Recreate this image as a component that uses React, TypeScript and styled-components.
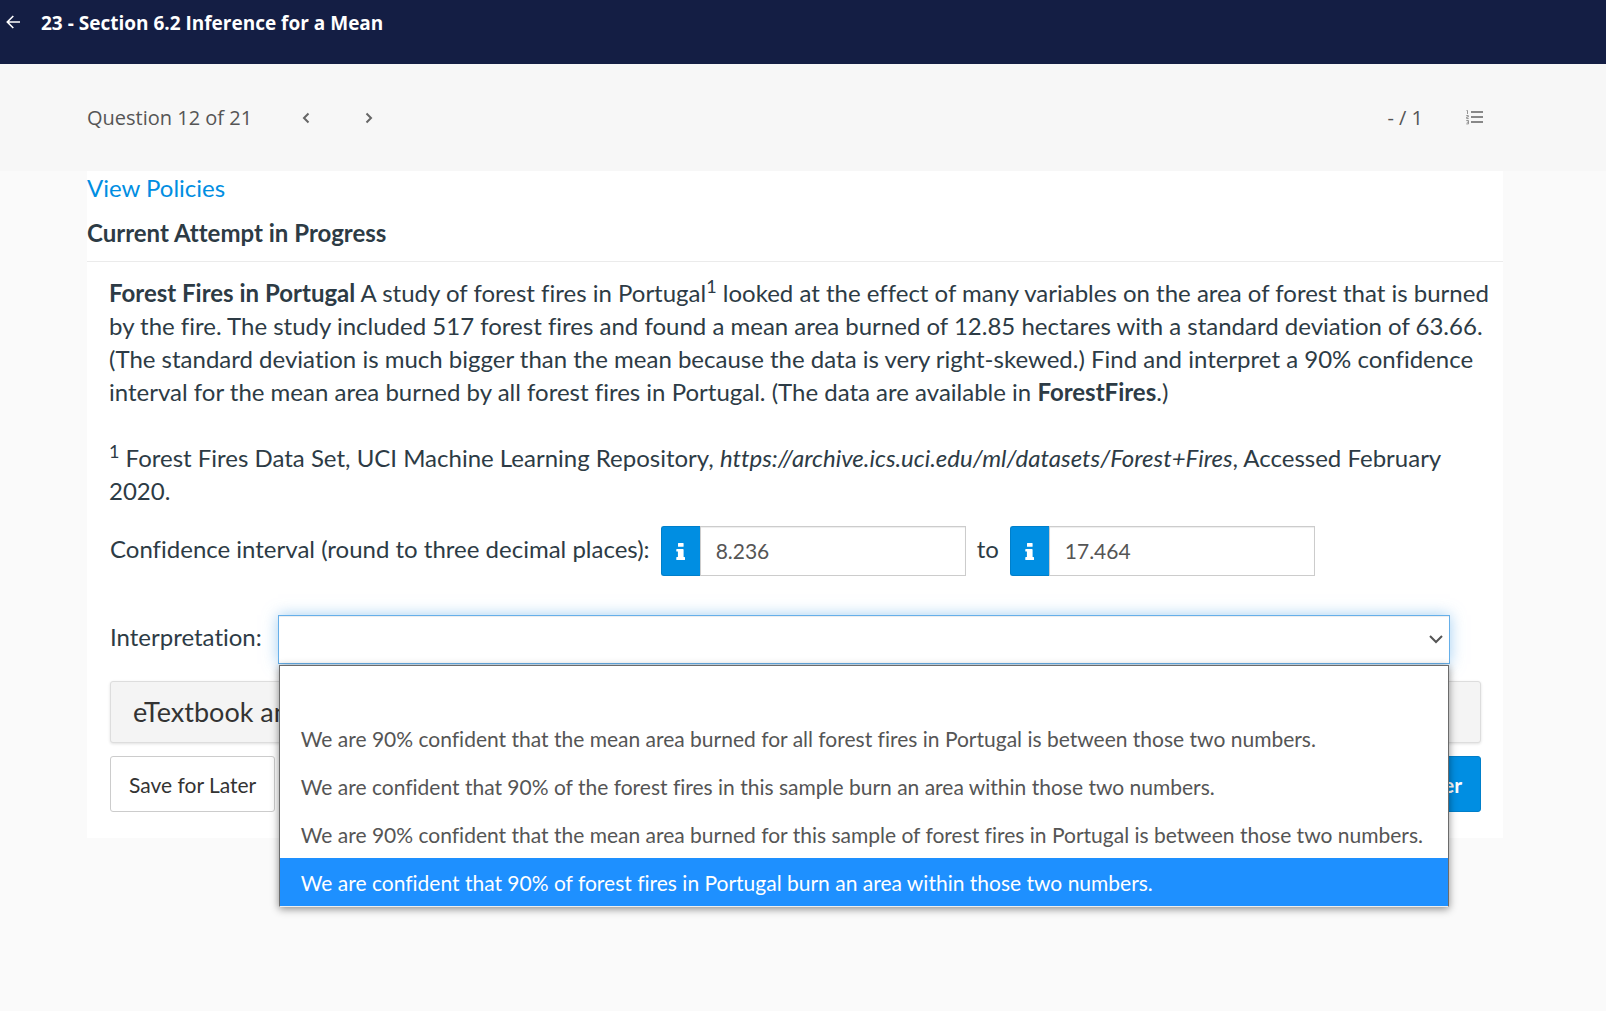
import React from 'react';
import styled, { createGlobalStyle } from 'styled-components';

const GlobalStyle = createGlobalStyle`
  *, *::before, *::after { box-sizing: border-box; }
  body {
    margin: 0;
    background: #fafafa;
    color: #2d3b45;
    font-family: Lato, sans-serif;
    font-size: 24px;
    line-height: 33px;
    font-variant-ligatures: no-common-ligatures;
  }
  button, input, select { font-family: inherit; font-variant-ligatures: inherit; }
  h1, h2, p, ul { margin: 0; padding: 0; }
`;

const Page = styled.div`
  min-height: 100vh;
`;

const Header = styled.header`
  display: flex;
  align-items: flex-start;
  gap: 21px;
  height: 64px;
  padding: 8px 5px;
  background: #141e44;
  color: #fff;
  font-family: 'Open Sans', sans-serif;
`;

const IconButton = styled.button`
  display: flex;
  align-items: center;
  justify-content: center;
  padding: 0;
  border: 0;
  background: none;
  color: inherit;
`;

const BackButton = styled(IconButton)`
  width: 15px;
  height: 28px;
`;

const Title = styled.h1`
  font-size: 19px;
  line-height: 30px;
  font-weight: 700;
`;

const QuestionBar = styled.nav`
  display: flex;
  align-items: center;
  height: 107px;
  padding: 0 123px 0 87px;
  background: #f7f7f7;
  color: #555;
  font-family: 'Open Sans', sans-serif;
  font-size: 20px;
`;

const Pager = styled.div`
  display: flex;
  margin-left: 42px;
  gap: 39px;
`;

const PagerButton = styled(IconButton)`
  width: 24px;
  height: 32px;
`;

const Score = styled.span`
  margin-left: auto;
  margin-right: 43px;
`;

const Card = styled.main`
  margin: 0 103px 0 87px;
  background: #fff;
`;

const CardHead = styled.div`
  display: flex;
  flex-direction: column;
  align-items: flex-start;
  gap: 12px;
  padding-bottom: 12px;
`;

const Policies = styled.a`
  color: #008ee2;
  text-decoration: none;
`;

const Subtitle = styled.h2`
  font-size: 24px;
  line-height: 33px;
  font-weight: 700;
`;

const Prose = styled.div`
  padding: 14px 8px 19px 22px;
  border-top: 1px solid #ebebeb;
`;

const Paragraph = styled.p`
  & + & {
    margin-top: 33px;
  }
`;

const Sup = styled.sup`
  position: relative;
  top: -9px;
  vertical-align: baseline;
  font-size: 18px;
  line-height: 0;
`;

const Form = styled.form`
  padding: 0 22px 26px 23px;
`;

const IntervalRow = styled.div`
  display: flex;
  align-items: center;
  gap: 11px;
  margin-bottom: 39px;
`;

const FieldLabel = styled.label`
  padding-bottom: 6px;
`;

const InputGroup = styled.div`
  display: flex;
  width: 305px;
  height: 50px;
`;

const InfoButton = styled(IconButton)`
  flex: none;
  width: 39px;
  border: 1px solid #007fca;
  border-right: 0;
  border-radius: 3px 0 0 3px;
  background: #008ee2;
  color: #fff;
`;

const NumberInput = styled.input`
  flex: 1;
  min-width: 0;
  padding: 0 15px 2px;
  border: 1px solid #ccc;
  border-radius: 0;
  outline: 0;
  background: #fff;
  box-shadow: inset 0 1px 1px rgba(0, 0, 0, 0.075);
  color: #555;
  font-size: 21px;
`;

const InterpretationRow = styled.div`
  display: flex;
  align-items: center;
  gap: 16px;
  padding-right: 31px;
  margin-bottom: 17px;
`;

const SelectWrap = styled.div`
  position: relative;
  flex: 1;
  display: grid;
  color: #555;
`;

const Select = styled.select`
  grid-area: 1 / 1;
  width: 100%;
  height: 49px;
  padding: 0 21px;
  appearance: none;
  border: 1px solid #66afe9;
  border-radius: 0;
  outline: 0;
  background: #fff;
  box-shadow: inset 0 1px 1px rgba(0, 0, 0, 0.075), 0 0 14px rgba(102, 175, 233, 0.6);
  color: #555;
  font-size: 21px;
`;

const Chevron = styled.svg`
  grid-area: 1 / 1;
  align-self: center;
  justify-self: end;
  margin: 0 6px 2px 0;
  z-index: 1;
  pointer-events: none;
`;

const Options = styled.ul`
  position: absolute;
  z-index: 2;
  top: 50px;
  left: 1px;
  right: 1px;
  border: 1px solid #6b6b6b;
  border-bottom-color: #eee;
  background: #fff;
  box-shadow: 0 2px 8px rgba(0, 0, 0, 0.45);
  list-style: none;
`;

const Option = styled.li<{ $active: boolean }>`
  height: 48px;
  padding: 0 21px;
  background: ${(p) => (p.$active ? '#1e90ff' : '#fff')};
  color: ${(p) => (p.$active ? '#fff' : '#555')};
  font-size: 21px;
  line-height: 50px;
  white-space: nowrap;
`;

const Textbook = styled.button`
  display: block;
  width: 100%;
  height: 62px;
  margin-bottom: 13px;
  padding: 0 22px 2px;
  border: 1px solid #ddd;
  border-radius: 3px;
  background: #f4f4f4;
  box-shadow: 0 1px 3px rgba(0, 0, 0, 0.12);
  color: #333;
  font-size: 27px;
  text-align: left;
`;

const Actions = styled.div`
  display: flex;
  justify-content: space-between;
`;

const ActionButton = styled.button<{ $primary?: boolean }>`
  height: 56px;
  padding: 0 18px;
  border: 1px solid ${(p) => (p.$primary ? '#007fca' : '#ccc')};
  border-radius: 3px;
  background: ${(p) => (p.$primary ? '#008ee2' : '#fff')};
  color: ${(p) => (p.$primary ? '#fff' : '#333')};
  font-size: 21px;
  font-weight: ${(p) => (p.$primary ? 700 : 400)};
`;

const InfoIcon = () => (
  <svg width="10" height="18" viewBox="0 0 10 18" fill="currentColor" aria-hidden="true">
    <path d="M2 1.5q0-.5.5-.5h4.600q.5 0 .5.5v2.800q0 .5-.5.5H2.500q-.5 0-.5-.5zM.9 7h6q.7 0 .7.7V15h.8q.6 0 .6.6v1.800q0 .6-.6.6H.900q-.6 0-.6-.6v-1.800Q.3 15 .9 15h1V9.500h-1Q.3 9.500.3 8.900V7.600Q.3 7 .9 7z" />
  </svg>
);

const Arrow = ({ d }: { d: string }) => (
  <svg width="8" height="12" viewBox="0 0 8 12" fill="none" stroke="#666" strokeWidth="2" aria-hidden="true">
    <path d={d} />
  </svg>
);

const NumberedList = () => (
  <svg width="17" height="15" viewBox="0 0 17 15" fill="none" stroke="#888" aria-hidden="true">
    <path d="M5 2h12M5 7h12M5 12h12" strokeWidth="2" />
    <path d="M.5 .5h1v3.500M.3 5.500h2v1.500h-1.600v1.600h2M.3 10.500h2.200v3.400h-2.200M.8 12.200h1.500" strokeWidth=".9" />
  </svg>
);

const intervalFields = [
  { id: 'lower', label: 'Confidence interval (round to three decimal places):', value: '8.236' },
  { id: 'upper', label: 'to', value: '17.464' },
];

const answers = [
  '',
  'We are 90% confident that the mean area burned for all forest fires in Portugal is between those two numbers.',
  'We are confident that 90% of the forest fires in this sample burn an area within those two numbers.',
  'We are 90% confident that the mean area burned for this sample of forest fires in Portugal is between those two numbers.',
  'We are confident that 90% of forest fires in Portugal burn an area within those two numbers.',
];

export default function App() {
  const [active, setActive] = React.useState(4);
  return (
    <Page>
      <GlobalStyle />
      <Header>
        <BackButton aria-label="Back">
          <svg width="14" height="14" viewBox="0 0 14 14" fill="none" stroke="currentColor" strokeWidth="1.6" aria-hidden="true">
            <path d="M14 7H1.500M7.300 1 1.300 7l6 6" />
          </svg>
        </BackButton>
        <Title>23 - Section 6.2 Inference for a Mean</Title>
      </Header>
      <QuestionBar>
        <span>Question 12 of 21</span>
        <Pager>
          <PagerButton aria-label="Previous question"><Arrow d="M6.500 1.500 2 6l4.500 4.500" /></PagerButton>
          <PagerButton aria-label="Next question"><Arrow d="M1.500 1.500 6 6l-4.500 4.500" /></PagerButton>
        </Pager>
        <Score>- / 1</Score>
        <IconButton aria-label="Question list"><NumberedList /></IconButton>
      </QuestionBar>
      <Card>
        <CardHead>
          <Policies href="#policies">View Policies</Policies>
          <Subtitle>Current Attempt in Progress</Subtitle>
        </CardHead>
        <Prose>
          <Paragraph>
            <b>Forest Fires in Portugal</b> A study of forest fires in Portugal<Sup>1</Sup> looked at the effect of many
            variables on the area of forest that is burned by the fire. The study included 517 forest fires and found a
            mean area burned of 12.85 hectares with a standard deviation of 63.66. (The standard deviation is much bigger
            than the mean because the data is very right-skewed.) Find and interpret a 90% confidence interval for the
            mean area burned by all forest fires in Portugal. (The data are available in <b>ForestFires</b>.)
          </Paragraph>
          <Paragraph>
            <Sup>1</Sup> Forest Fires Data Set, UCI Machine Learning Repository,{' '}
            <i>https://archive.ics.uci.edu/ml/datasets/Forest+Fires</i>, Accessed February 2020.
          </Paragraph>
        </Prose>
        <Form onSubmit={(e) => e.preventDefault()}>
          <IntervalRow>
            {intervalFields.map((f) => (
              <React.Fragment key={f.id}>
                <FieldLabel htmlFor={f.id}>{f.label}</FieldLabel>
                <InputGroup>
                  <InfoButton type="button" aria-label="Answer format"><InfoIcon /></InfoButton>
                  <NumberInput id={f.id} type="text" defaultValue={f.value} />
                </InputGroup>
              </React.Fragment>
            ))}
          </IntervalRow>
          <InterpretationRow>
            <FieldLabel htmlFor="interpretation">Interpretation:</FieldLabel>
            <SelectWrap>
              <Select id="interpretation" defaultValue="">
                <option value="" />
              </Select>
              <Chevron width="16" height="10" viewBox="0 0 16 10" fill="none" stroke="currentColor" strokeWidth="2" aria-hidden="true">
                <path d="m2 2 6 6 6-6" />
              </Chevron>
              <Options role="listbox" aria-label="Interpretation">
                {answers.map((text, i) => (
                  <Option key={i} role="option" aria-selected={i === active} $active={i === active} onMouseEnter={() => setActive(i)}>
                    {text}
                  </Option>
                ))}
              </Options>
            </SelectWrap>
          </InterpretationRow>
          <Textbook type="button">eTextbook and Media</Textbook>
          <Actions>
            <ActionButton type="button">Save for Later</ActionButton>
            <ActionButton $primary>Submit Answer</ActionButton>
          </Actions>
        </Form>
      </Card>
    </Page>
  );
}
